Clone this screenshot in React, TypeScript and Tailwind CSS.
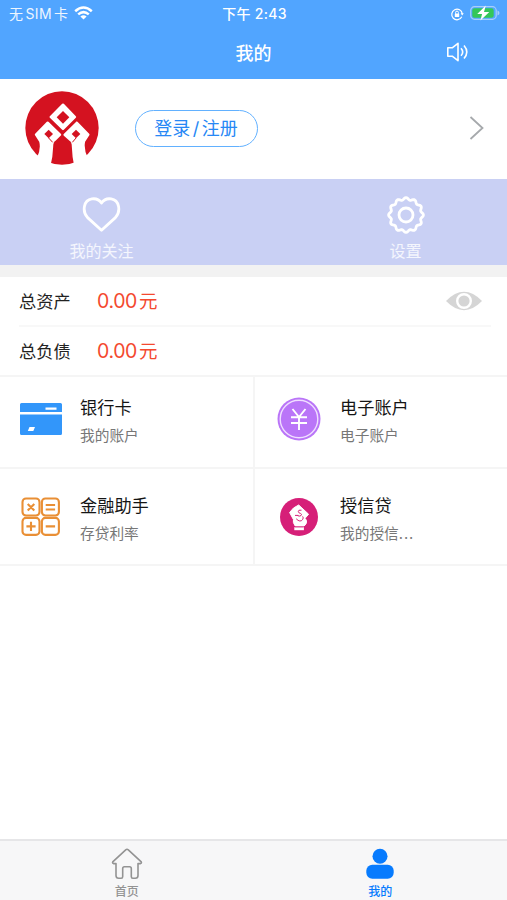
import type { ReactNode } from "react";

const gearPath =
  Array.from({ length: 144 }, (_, i) => {
    const a = (i / 144) * Math.PI * 2;
    const r = 16.3 + 1.1 * Math.cos(a * 12);
    return `${i ? "L" : "M"}${(20 + r * Math.sin(a)).toFixed(2)} ${(20 - r * Math.cos(a)).toFixed(2)}`;
  }).join("") + "Z";

function StatusBar() {
  return (
    <div className="grid h-7 grid-cols-3 items-center pl-[9px] pr-[7px] text-[14px] leading-none text-white">
      <div className="flex items-center">
        <span className="w-[60px] whitespace-nowrap text-[14px] tracking-[0.4px] opacity-90">
          无<span className="mx-[2px]">SIM</span>卡
        </span>
        <svg className="ml-[5px] h-[14px] w-[19px] -translate-y-px" viewBox="0 0 19 14" fill="none" stroke="white" strokeWidth="2.5">
          <path d="M1.2 5.2Q9.5 -2.2 17.8 5.2" />
          <path d="M4.2 8.4Q9.5 3.8 14.8 8.4" />
          <path d="M9.5 13.6L6.4 10.6Q9.5 8 12.6 10.6Z" fill="white" stroke="none" />
        </svg>
      </div>
      <span className="whitespace-nowrap text-center font-medium tracking-[0.3px]">下午 2:43</span>
      <div className="flex items-center justify-end">
        <svg className="h-[14px] w-[14px]" viewBox="0 0 14 14" fill="none" stroke="white">
          <path d="M11.8 9.8A5.3 5.3 0 1 1 12.3 6.8" strokeWidth="1.2" />
          <path d="M10.6 6.3h3.2l-1.6 2.2z" fill="white" stroke="none" />
          <rect x="4.8" y="6.5" width="4.4" height="3.4" rx=".5" fill="white" stroke="none" />
          <path d="M5.6 6.8V5.5a1.4 1.4 0 0 1 2.8 0v1.3" />
        </svg>
        <svg className="ml-[6px] h-[16px] w-[30px] -translate-y-px" viewBox="0 0 30 16">
          <rect x=".7" y="1.7" width="25.5" height="12.6" rx="3.8" fill="none" stroke="#a9cffa" strokeWidth="1.2" />
          <rect x="2.3" y="3.3" width="21.4" height="9.4" rx="2.3" fill="#34c759" />
          <path d="M27.5 5.6q2 .7 2 2.4t-2 2.4z" fill="#a9cffa" />
          <path d="M15.8 .6L7.2 8.9h4.9l-1.7 6.5L19.3 7h-5.3z" fill="white" />
        </svg>
      </div>
    </div>
  );
}

function TitleBar() {
  return (
    <div className="grid h-[50px] grid-cols-3 items-center text-white">
      <span />
      <h1 className="pt-px text-center text-[18px] font-medium leading-none">我的</h1>
      <svg className="mr-[37px] h-[20px] w-[24px] -translate-y-px justify-self-end" viewBox="0 0 24 20" fill="none" stroke="white" strokeWidth="1.6">
        <path d="M1.8 5.8H6.2l5.8-4.5v17.4L6.2 14.2H1.8z" strokeLinejoin="round" />
        <path d="M15 6.2q3.4 3.8 0 7.6" />
        <path d="M18 3.5q5.6 6.5 0 13" />
      </svg>
    </div>
  );
}

function Logo() {
  return (
    <svg className="-mt-[2px] h-[78px] w-[76px]" viewBox="0 0 228 234">
      <circle cx="114" cy="117" r="110" fill="#d41220" />
      <g fill="white" stroke="white" strokeWidth="7" strokeLinejoin="round">
        <path d="M117 47L153 84L117 120L80 84Z" />
        <path d="M71 101L108 137L93 152Q84 157 84 173Q83 204 76 230L42 208Q55 181 49 157L36 137Z" />
        <path d="M158 101L193 137L180 157Q175 181 188 208L154 230Q148 204 147 173Q147 157 138 152L121 137Z" />
      </g>
      <g fill="#d41220">
        <path d="M117 66L136 85L117 104L98 85Z" />
        <path d="M74 122L87 135L74 148L61 135Z" />
        <path d="M156 122L169 135L156 148L143 135Z" />
        <path d="M115 144L131 162H99Z" />
      </g>
      <path d="M78 97L116 135L155 97M116 130V150" fill="none" stroke="#d41220" strokeWidth="4" />
      <path d="M74 147L86 160M156 147L145 160" stroke="#d41220" strokeWidth="3" />
    </svg>
  );
}

function Profile() {
  return (
    <section className="flex h-[100px] items-center pl-6 pr-[23px]">
      <Logo />
      <button className="ml-[35px] -mt-px h-[37px] w-[123px] whitespace-nowrap rounded-full border-[1.5px] border-[#62b1ff] pr-px text-[18px] leading-none text-[#2788f5]">
        登录<span className="mx-[2.5px]">/</span>注册
      </button>
      <svg className="-mt-[2px] ml-auto h-[26px] w-[15px]" viewBox="0 0 15 26" fill="none" stroke="#a6a9ac" strokeWidth="1.8">
        <path d="M1.5 2L13.5 13L1.5 24" />
      </svg>
    </section>
  );
}

function Shortcut({ label, children }: { label: string; children: ReactNode }) {
  return (
    <div className="flex w-[203px] flex-col items-center pt-4">
      <svg className="h-10 w-10" viewBox="0 0 40 40" fill="none" stroke="white" strokeWidth="2.8" strokeLinejoin="round">
        {children}
      </svg>
      <span className="mt-[8px] text-[16px] leading-[16px] text-white/80">{label}</span>
    </div>
  );
}

function Shortcuts() {
  return (
    <section className="flex h-[86px] justify-between bg-[#c9d0f4]">
      <Shortcut label="我的关注">
        <path d="M19.5 35.2L5.6 22.6C-.3 16 1.8 5 9.8 3.9C14.2 3.2 17.8 5.5 19.5 8C21.2 5.5 24.8 3.2 29.2 3.9C37.2 5 39.3 16 33.4 22.6Z" />
      </Shortcut>
      <Shortcut label="设置">
        <path d={gearPath} />
        <circle cx="20" cy="20" r="7" />
      </Shortcut>
    </section>
  );
}

function Balance({ label, children }: { label: string; children?: ReactNode }) {
  return (
    <div className="flex h-12 items-center">
      <span className="w-[78px] pt-[2px] text-[17.2px] leading-none text-[#222]">{label}</span>
      <span className="flex items-center whitespace-nowrap pt-[2px] leading-none text-[#f4492f]">
        <span className="text-[19.5px] tracking-[-0.4px]">0.00</span>
        <span className="-mt-px ml-[2px] text-[18.5px]">元</span>
      </span>
      {children}
    </div>
  );
}

function Balances() {
  return (
    <section className="border-b-2 border-[#f5f5f5] pl-[19px]">
      <div className="mr-4 border-b-2 border-[#f8f8f8]">
        <Balance label="总资产">
          <svg className="ml-auto mr-[9px] h-[20px] w-[36px]" viewBox="0 0 36 20">
            <path d="M0 10Q9 .8 18 .8T36 10Q27 19.2 18 19.2T0 10Z" fill="#d5d5d5" />
            <circle cx="18" cy="10" r="6.8" fill="#d5d5d5" stroke="white" strokeWidth="2.4" />
          </svg>
        </Balance>
      </div>
      <Balance label="总负债" />
    </section>
  );
}

const services = [
  {
    title: "银行卡",
    note: "我的账户",
    icon: (
      <>
        <path d="M1 7.5q0-1.5 1.5-1.5h39q1.5 0 1.5 1.5V15H1zM1 17.5h42v19q0 1.5-1.5 1.5h-39Q1 38 1 36.5z" fill="#3296fa" />
        <path d="M26.5 10.5h11v2.2h-11zM10.5 30h5.5l-1.7 4H8.8z" fill="white" />
      </>
    ),
  },
  {
    title: "电子账户",
    note: "电子账户",
    icon: (
      <>
        <circle cx="22" cy="22" r="21.5" fill="#ba75f8" />
        <circle cx="22" cy="22" r="18.8" fill="none" stroke="#f0dfff" strokeWidth="1.4" />
        <path d="M15.5 12L22 20L28.5 12M22 20V33M14 20.2H30M14 26H30" fill="none" stroke="white" strokeWidth="1.9" />
      </>
    ),
  },
  {
    title: "金融助手",
    note: "存贷利率",
    icon: (
      <g fill="none" stroke="#e98f35" strokeWidth="2.1">
        <rect x="3.5" y="3.5" width="17" height="17" rx="3.5" />
        <rect x="22.9" y="3.5" width="17" height="17" rx="3.5" />
        <rect x="3.5" y="22.9" width="17" height="17" rx="3.5" />
        <rect x="22.9" y="22.9" width="17" height="17" rx="3.5" />
        <path d="M8.7 9l6.6 6.6M15.3 9L8.7 15.6M26.7 10h9.4M26.7 14.5h9.4M7.4 31.4H16.6M12 26.8v9.2M26.7 31.4h9.4" />
      </g>
    ),
  },
  {
    title: "授信贷",
    note: "我的授信...",
    icon: (
      <>
        <circle cx="22" cy="22" r="19" fill="#d61f78" />
        <path d="M21.7 10L31.6 19.2L28 23.3q2.3 2 1.3 4.9-.8 2-2.5 2.8h-8.600q-2.700-3.600-1.800-6.500L12.600 17.500L16.500 13z" fill="white" stroke="white" strokeLinejoin="round" />
        <path d="M17.3 32h9.6v3.2h-9.6z" fill="white" />
        <path d="M17.5 32h9.2" stroke="#d61f78" strokeWidth=".8" />
        <path d="M24.5 15.2q-3.5-.6-3.2 1.5.2 1.3 2.1 1.7 2 .7.6 2.2-1.6 1-3.5 0M18 20.4h3.3M19.2 23.8q4 4 6.4.8 1.3-1.8 0-3.2" fill="none" stroke="#d61f78" strokeWidth="1" />
      </>
    ),
  },
];

function ServiceGrid() {
  return (
    <section className="grid grid-cols-[255px_1fr]">
      {services.map((item, i) => (
        <div
          key={item.title}
          className={`flex border-b-2 border-[#f5f5f5] ${i < 2 ? "h-[92px]" : "h-[97px] pt-[6px]"} ${i % 2 ? "pl-[22px]" : "border-r-2 pl-[19px]"}`}
        >
          <svg className="mt-[20px] h-11 w-11" viewBox="0 0 44 44">
            {item.icon}
          </svg>
          <div className={`pt-[22px] ${i % 2 ? "ml-[19px]" : "ml-[17px]"}`}>
            <h2 className="text-[17.2px] leading-[18px] text-[#151515]">{item.title}</h2>
            <p className="mt-[11px] text-[14.7px] leading-[16px] text-[#777]">
              {item.note.replace("...", "")}
              {item.note.endsWith("...") && <span className="tracking-[0.9px]">...</span>}
            </p>
          </div>
        </div>
      ))}
    </section>
  );
}

function TabBar() {
  return (
    <nav className="mt-auto grid h-[61px] grid-cols-2 border-t-2 border-[#e6e6e8] bg-[#f7f7f8] text-[12px] font-medium leading-[14px]">
      <div className="flex flex-col items-center pt-[7px] text-[#939393]">
        <svg className="h-[32px] w-[32px]" viewBox="0 0 32 32" fill="none" stroke="currentColor" strokeWidth="1.6" strokeLinejoin="round">
          <path d="M14.7 1.8q1.3-1.1 2.6 0L30 13.6q1 1.3-.5 2H27v12q0 2.7-2.7 2.7h-2.5q-1.5 0-1.5-1.7v-8.2q0-1.7-1.7-1.7h-5.2q-1.7 0-1.7 1.7v8.2q0 1.7-1.5 1.7H7.7Q5 30.3 5 27.6v-12H2.5q-1.5-.7-.5-2z" />
        </svg>
        <span className="mt-[5px]">首页</span>
      </div>
      <div className="flex flex-col items-center pt-[7px] text-[#077bfe]">
        <svg className="h-[32px] w-[32px]" viewBox="0 0 32 32" fill="currentColor">
          <circle cx="16" cy="8.3" r="7.5" />
          <rect x="2.3" y="16.7" width="27.4" height="14" rx="6" />
        </svg>
        <span className="mt-[5px]">我的</span>
      </div>
    </nav>
  );
}

export default function App() {
  return (
    <main className="flex h-[900px] w-[507px] flex-col overflow-hidden bg-white font-['Inter','Noto_Sans_CJK_SC',sans-serif]">
      <header className="h-[79px] bg-[#51a5ff]">
        <StatusBar />
        <TitleBar />
      </header>
      <Profile />
      <Shortcuts />
      <div className="h-3 bg-[#f2f2f2]" />
      <Balances />
      <ServiceGrid />
      <TabBar />
    </main>
  );
}
